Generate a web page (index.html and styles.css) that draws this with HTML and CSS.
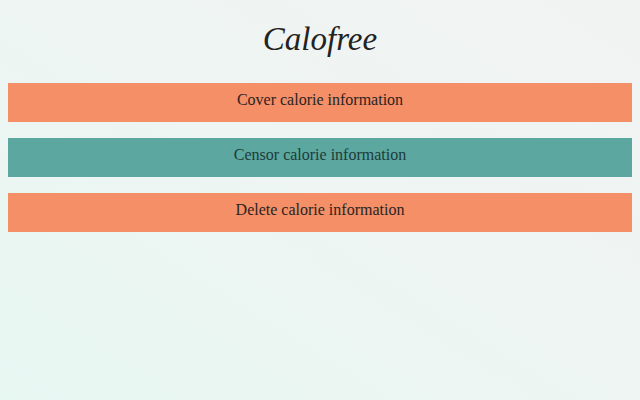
FILE: index.html
```html
<!DOCTYPE html>
<html>
<head>
<meta charset="utf-8">
<link rel="stylesheet" href="styles.css">
</head>
<body>
<h1 class="title">Calofree</h1>
<div class="actions">
  <button class="btn btn-orange">Cover calorie information</button>
  <button class="btn btn-teal">Censor calorie information</button>
  <button class="btn btn-orange">Delete calorie information</button>
</div>
</body>
</html>
```
FILE: styles.css
```css
html {
  min-height: 100%;
  background: linear-gradient(to top right, #e7f7f2 0%, #eef5f2 50%, #f1f3f2 100%);
}
body {
  margin: 0;
  padding: 0 8px;
  font-family: "Liberation Serif", "Times New Roman", serif;
}
.title {
  margin: 0;
  padding-top: 20px;
  height: 83px;
  box-sizing: border-box;
  text-align: center;
  font-style: italic;
  font-weight: normal;
  font-size: 33px;
  line-height: 38px;
  color: #222;
}
.actions {
  display: flex;
  flex-direction: column;
  gap: 16px;
}
.btn {
  display: block;
  width: 100%;
  height: 39px;
  border: none;
  margin: 0;
  padding: 0 0 5px;
  font-family: "Liberation Serif", "Times New Roman", serif;
  font-size: 16px;
  color: #2a2420;
}
.btn-orange {
  background: #f48f68;
}
.btn-teal {
  background: #5ca7a0;
  color: #1d3b39;
}
```
